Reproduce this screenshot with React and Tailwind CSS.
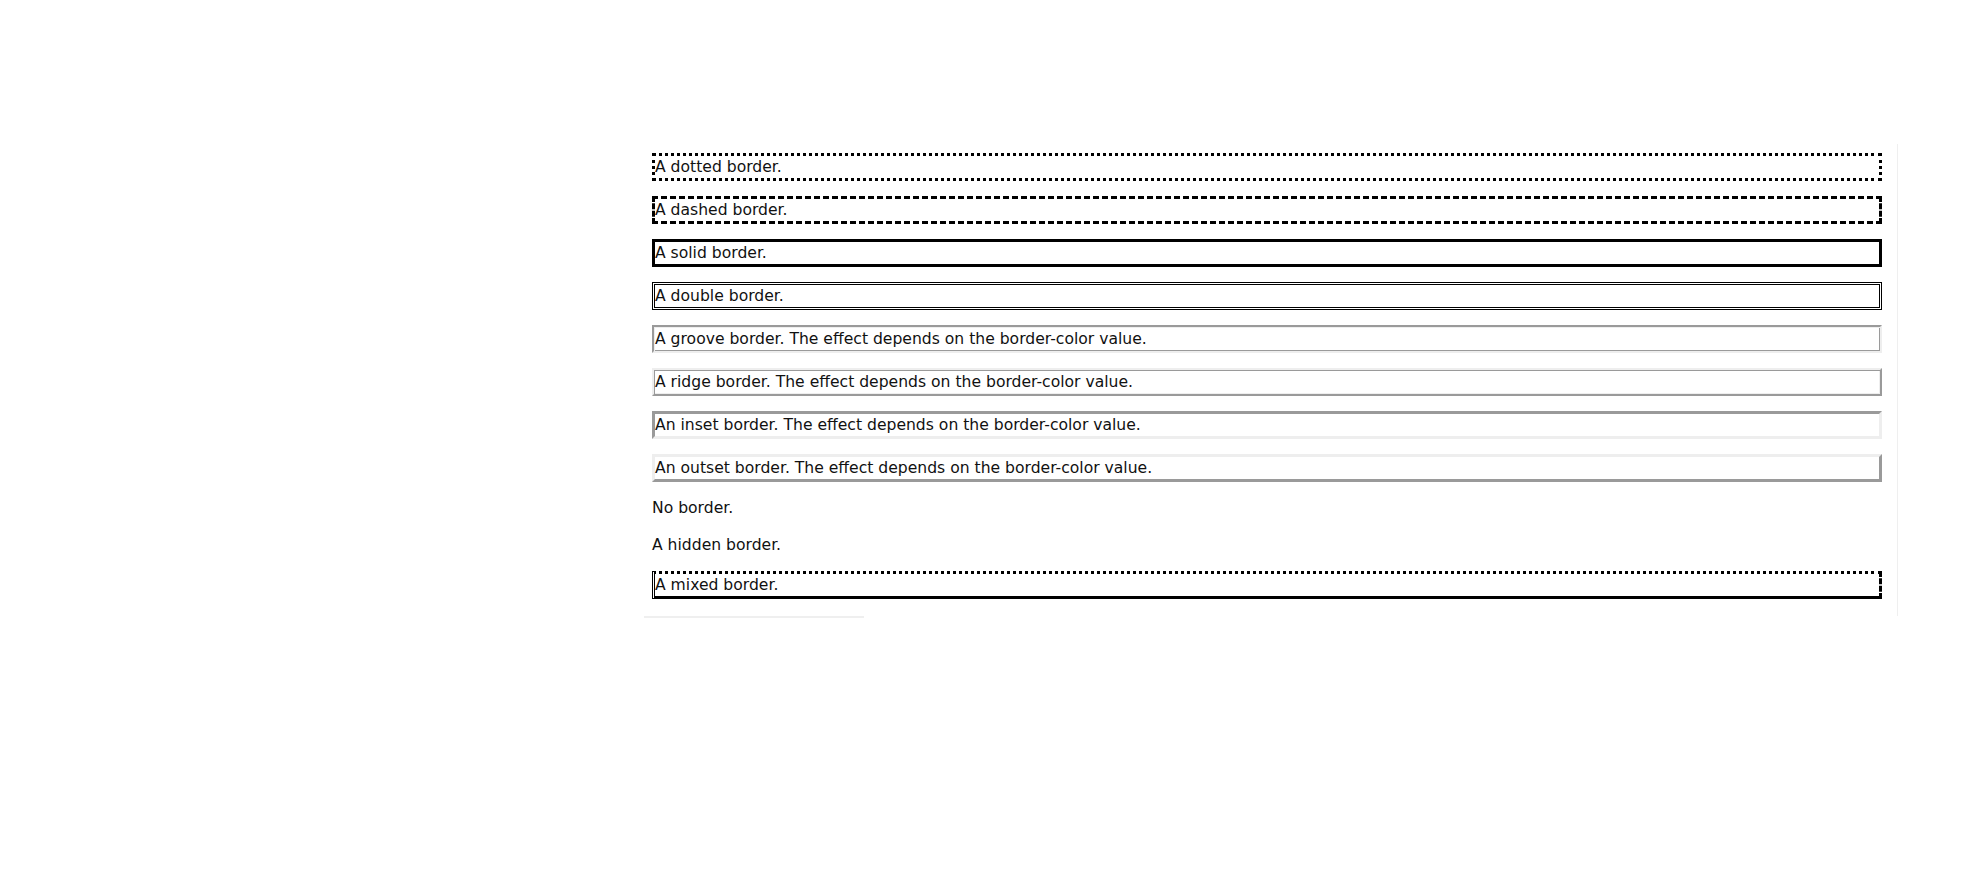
const rows = [
  { text: "A dotted border.", cls: "border-[3px] border-dotted border-black" },
  { text: "A dashed border.", cls: "border-[3px] border-dashed border-black" },
  { text: "A solid border.", cls: "border-[3px] border-solid border-black" },
  { text: "A double border.", cls: "border-[3px] border-double border-black" },
  {
    text: "A groove border. The effect depends on the border-color value.",
    cls: "border-2 border-solid border-t-[#9a9a9a] border-l-[#9a9a9a] border-b-[#eeeeee] border-r-[#eeeeee] py-px pl-px shadow-[inset_1px_1px_0_#eeeeee,inset_-1px_-1px_0_#9a9a9a]",
  },
  {
    text: "A ridge border. The effect depends on the border-color value.",
    cls: "border-2 border-solid border-t-[#eeeeee] border-l-[#eeeeee] border-b-[#9a9a9a] border-r-[#9a9a9a] py-px pl-px shadow-[inset_1px_1px_0_#9a9a9a,inset_-1px_-1px_0_#eeeeee]",
  },
  {
    text: "An inset border. The effect depends on the border-color value.",
    cls: "border-[3px] border-solid border-t-[#9a9a9a] border-l-[#9a9a9a] border-b-[#eeeeee] border-r-[#eeeeee]",
  },
  {
    text: "An outset border. The effect depends on the border-color value.",
    cls: "border-[3px] border-solid border-t-[#eeeeee] border-l-[#eeeeee] border-b-[#9a9a9a] border-r-[#9a9a9a]",
  },
  { text: "No border.", cls: "border-none" },
  { text: "A hidden border.", cls: "border-hidden" },
  {
    text: "A mixed border.",
    cls: "border-[3px] border-black border-t-dotted border-r-dashed border-b-solid border-l-double [border-style:dotted_dashed_solid_double]",
  },
];

export default function App() {
  return (
    <div className="min-h-[874px] bg-white pt-[144px] pl-[644px] font-['DejaVu_Sans',Verdana,sans-serif] text-[15.6px] leading-[22px] text-[#111]">
      <div className="w-[1254px] h-[472px] border-r border-[#efefef] pt-[9px] pl-2 pr-[15px]">
        <div className="flex flex-col gap-[15px]">
          {rows.map((row) => (
            <p key={row.text} className={row.cls}>
              {row.text}
            </p>
          ))}
        </div>
      </div>
      <div className="w-[220px] h-[2px] bg-[#efefef]" />
    </div>
  );
}
